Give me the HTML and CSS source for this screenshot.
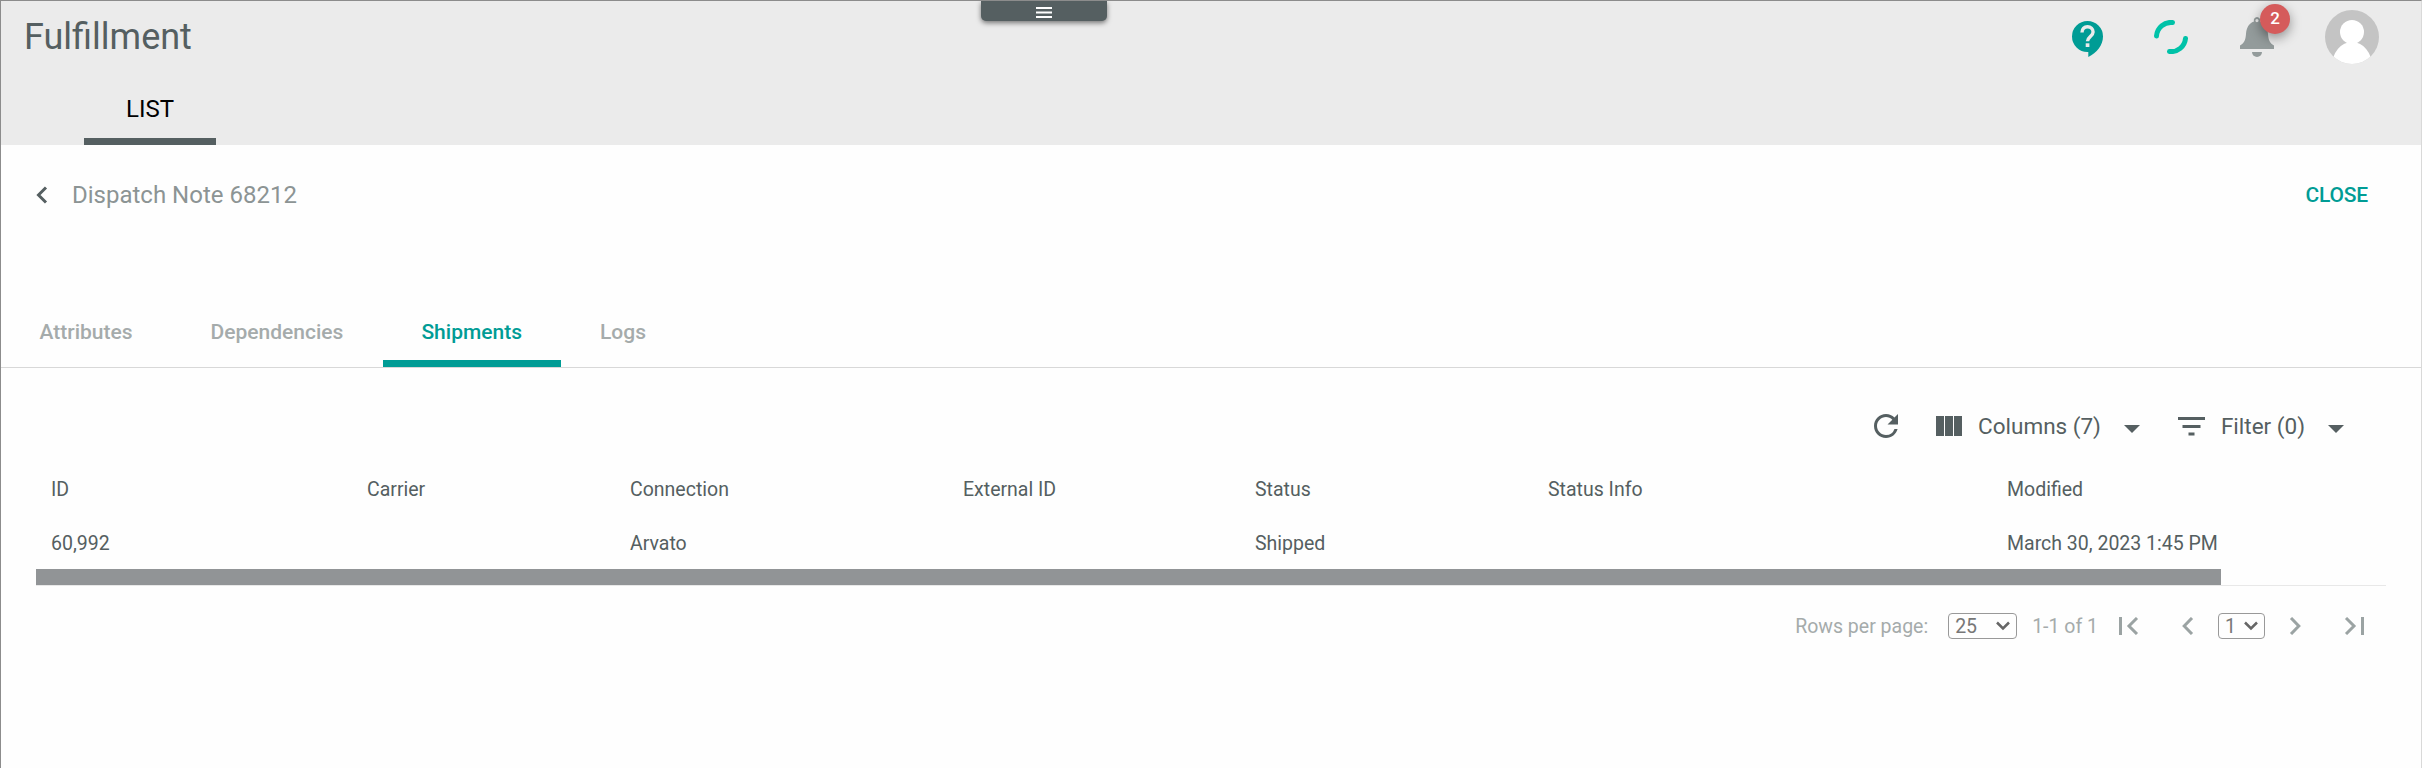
FILE: index.html
```html
<!DOCTYPE html>
<html lang="en">
<head>
<meta charset="utf-8">
<title>Fulfillment</title>
<link rel="stylesheet" href="styles.css">
</head>
<body>
<div class="app">
  <header class="header">
    <button class="handle" aria-label="Menu"><svg width="16" height="12" viewBox="0 0 16 12"><path d="M0 1h16M0 5.500h16M0 10h16" stroke="#fff" stroke-width="2"/></svg></button>
    <div class="header-top">
      <h1 class="title">Fulfillment</h1>
      <div class="actions">
        <svg class="help" width="31" height="36" viewBox="0 0 31 36"><path d="M15.500 0A15.500 15.500 0 0 0 0 15.500 15.500 15.500 0 0 0 15.500 31h.8v5C24.800 32 31 24 31 15.500A15.500 15.500 0 0 0 15.500 0z" fill="#009c95"/><path d="M10 11.400C10 7.800 12.300 5.700 15.500 5.700s5.600 2.100 5.600 5.200c0 4.200-5.600 4.900-5.600 9.300" fill="none" stroke="#ebebeb" stroke-width="3.400"/><path d="M13.700 22.300h3.700v3.700h-3.700z" fill="#ebebeb"/></svg>
        <svg class="loader" width="34" height="34" viewBox="0 0 34 34"><path d="M2.500 16A14.500 14.500 0 0 1 18.500 2.500M31.500 18.500A14.500 14.500 0 0 1 15.500 31.500" fill="none" stroke="#00c2a8" stroke-width="5" stroke-linecap="round"/></svg>
        <div class="bell">
          <svg width="34" height="40" viewBox="0 0 34 40"><path fill-rule="evenodd" d="M17 0a3.300 3.300 0 0 1 3 4.500c5.500 2 7.500 6.500 8 12.500.5 6 1.500 9 6 11.500V32H0v-3.500C4.500 26 5.500 23 6 17c.5-6 2.500-10.500 8-12.500A3.300 3.300 0 0 1 17 0zm0 2a1.600 1.600 0 1 0 0 3.200A1.600 1.600 0 0 0 17 2z" fill="#939b9b"/><path d="M12 35h10a5 5 0 0 1-10 0z" fill="#939b9b"/></svg>
          <span class="badge">2</span>
        </div>
        <svg class="avatar" width="54" height="54" viewBox="0 0 54 54"><clipPath id="disc"><circle cx="27" cy="27" r="27"/></clipPath><g clip-path="url(#disc)"><path d="M0 0h54v54H0z" fill="#c4c4c4"/><circle cx="27" cy="22" r="12" fill="#fff"/><ellipse cx="27" cy="56" rx="20" ry="24" fill="#fff"/></g></svg>
      </div>
    </div>
    <nav class="main-tabs"><a class="main-tab">LIST</a></nav>
  </header>

  <section class="subheader">
    <svg class="back" width="12" height="18" viewBox="0 0 12 18"><path d="M10 1.500L2.500 9l7.500 7.500" fill="none" stroke="#555f61" stroke-width="3"/></svg>
    <h2 class="record">Dispatch Note 68212</h2>
    <button class="close">CLOSE</button>
  </section>

  <nav class="tabs">
    <a class="tab">Attributes</a><a class="tab">Dependencies</a><a class="tab active">Shipments</a><a class="tab">Logs</a>
  </nav>

  <div class="toolbar">
    <svg class="refresh" width="24" height="24" viewBox="4 4 16 16"><path d="M17.650 6.350A7.958 7.958 0 0 0 12 4c-4.420 0-7.990 3.580-7.990 8s3.570 8 7.990 8c3.730 0 6.840-2.550 7.730-6h-2.080A5.990 5.990 0 0 1 12 18c-3.310 0-6-2.690-6-6s2.690-6 6-6c1.660 0 3.140.690 4.220 1.780L13 11h7V4z" fill="#555f61"/></svg>
    <div class="tool columns">
      <svg width="26" height="20" viewBox="0 0 26 20"><path d="M0 0h8v20H0zM9 0h8v20H9zM18 0h8v20h-8z" fill="#555f61"/></svg>
      <span>Columns (7)</span><i class="caret"></i>
    </div>
    <div class="tool filter">
      <svg width="27" height="19" viewBox="0 0 27 19"><path d="M0 0h27v3H0zM4.500 8h18v3h-18zM10.500 15.500h6v3h-6z" fill="#555f61"/></svg>
      <span>Filter (0)</span><i class="caret"></i>
    </div>
  </div>

  <div class="table">
    <div class="row"><span>ID</span><span>Carrier</span><span>Connection</span><span>External ID</span><span>Status</span><span>Status Info</span><span>Modified</span></div>
    <div class="row"><span>60,992</span><span></span><span>Arvato</span><span></span><span>Shipped</span><span></span><span>March 30, 2023 1:45 PM</span></div>
    <div class="scroll"><div class="thumb"></div></div>
  </div>

  <footer class="pager">
    <span class="rows-label">Rows per page:</span>
    <div class="select size"><span>25</span><svg width="14" height="10" viewBox="0 0 14 10"><path d="M1 1.500l6 6 6-6" fill="none" stroke="#666" stroke-width="2.500"/></svg></div>
    <span class="range">1-1 of 1</span>
    <svg class="first" width="20" height="18" viewBox="0 0 20 18"><path d="M1.500 0v18M18 1L10 9l8 8" fill="none" stroke="#9ba3a3" stroke-width="3"/></svg>
    <svg class="prev" width="12" height="18" viewBox="0 0 12 18"><path d="M10 1L2.200 9l7.800 8" fill="none" stroke="#9ba3a3" stroke-width="3"/></svg>
    <div class="select page"><span>1</span><svg width="14" height="10" viewBox="0 0 14 10"><path d="M1 1.500l6 6 6-6" fill="none" stroke="#666" stroke-width="2.500"/></svg></div>
    <svg class="next" width="12" height="18" viewBox="0 0 12 18"><path d="M2 1l7.800 8L2 17" fill="none" stroke="#9ba3a3" stroke-width="3"/></svg>
    <svg class="last" width="20" height="18" viewBox="0 0 20 18"><path d="M2 1l8 8-8 8M18.500 0v18" fill="none" stroke="#9ba3a3" stroke-width="3"/></svg>
  </footer>
</div>
</body>
</html>
```
FILE: styles.css
```css
* { box-sizing: border-box; }
body { margin: 0; font-family: Roboto, sans-serif; color: #555f61; background: #fefefe; }
svg { display: block; flex: none; }
button { border: 0; background: none; padding: 0; font: inherit; }
.app { height: 768px; border: 1px solid #8c8c8c; border-right-color: #d9d9d9; border-bottom: 0; overflow: hidden; }

.header { position: relative; height: 144px; background: #ebebeb; display: flex; flex-direction: column; justify-content: space-between; }
.header-top { display: flex; justify-content: space-between; padding: 0 42px 0 23px; }
.title { margin: 15px 0 0; font-size: 36px; line-height: 42px; font-weight: 400; }
.handle { position: absolute; left: 980px; top: 0; width: 126px; height: 20px; padding: 4px 0 0 55px; background: #555f61; border-radius: 0 0 5px 5px; box-shadow: 0 2px 5px rgba(0, 0, 0, .5); }
.actions { display: flex; align-items: flex-start; }
.help { margin: 20px 51px 0 0; }
.loader { margin: 19px 52px 0 0; }
.bell { position: relative; margin: 16px 51px 0 0; }
.badge { position: absolute; left: 20px; top: -13px; width: 30px; height: 30px; border-radius: 50%; background: #d55b5b; color: #fff; font-size: 17px; font-weight: 500; line-height: 29px; text-align: center; box-shadow: 0 4px 12px rgba(0, 0, 0, .4); }
.avatar { margin-top: 9px; }
.main-tabs { padding-left: 83px; display: flex; }
.main-tab { width: 132px; height: 56px; padding-top: 6px; border-bottom: 7px solid #555f61; color: #000; font-size: 24px; line-height: 28px; text-align: center; }

.subheader { display: flex; align-items: center; height: 100px; padding: 0 53px 0 35px; }
.record { flex: 1; margin: 0 0 0 24px; font-size: 24px; font-weight: 400; line-height: 28px; color: #8c9494; }
.close { color: #009c95; font-size: 21px; font-weight: 500; letter-spacing: -.2px; }

.tabs { display: flex; height: 123px; align-items: flex-end; border-bottom: 1px solid #d8d8d8; }
.tab { height: 52px; padding: 4px 39.5px 0 38.5px; font-size: 21px; line-height: 26px; font-weight: 500; color: #a5abab; }
.active { color: #009c95; border-bottom: 7px solid #009c95; }

.toolbar { display: flex; height: 93px; padding: 24px 77px 0 0; justify-content: flex-end; align-items: flex-start; font-size: 22.5px; line-height: 28px; }
.refresh { margin: 22px 38px 0 0; }
.tool { display: flex; align-items: center; margin-top: 20px; }
.columns { margin-right: 38px; }
.tool svg { margin-right: 16px; }
.caret { margin: 5px 0 0 23px; border: 8px solid transparent; border-top-color: #555f61; border-bottom: 0; }

.table { padding: 0 35px; }
.row { display: grid; grid-template-columns: 316px 263px 333px 292px 293px 459px 1fr; height: 54px; padding: 4px 0 0 15px; align-items: center; font-size: 19.5px; line-height: 24px; }
.scroll { height: 17px; border-bottom: 1px solid #e8e8e8; }
.thumb { width: 2185px; height: 16px; background: #919496; }

.pager { display: flex; align-items: center; justify-content: flex-end; height: 80px; padding-right: 57px; color: #a5abab; font-size: 19.5px; }
.select { display: flex; align-items: center; justify-content: space-between; height: 26px; padding: 0 6px; border: 1px solid #999; border-radius: 4px; color: #777; }
.size { width: 69px; margin: 0 15px 0 20px; }
.page { width: 47px; margin: 0 24px; }
.first { margin: 0 43px 0 21px; }
.last { margin-left: 43px; }
```
